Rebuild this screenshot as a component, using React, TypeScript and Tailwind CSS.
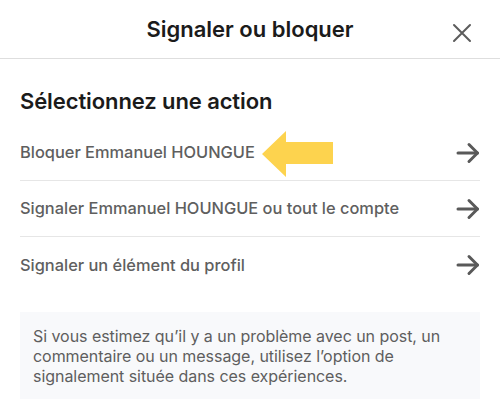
const rows = [
  "Bloquer Emmanuel HOUNGUE",
  "Signaler Emmanuel HOUNGUE ou tout le compte",
  "Signaler un élément du profil",
];

function ArrowRight() {
  return (
    <svg width="24" height="22" viewBox="0 0 24 22" fill="none" stroke="#595959" strokeWidth="3" strokeLinecap="round" strokeLinejoin="round">
      <path d="M2 11h19.5" />
      <path d="M13 2.5 21.5 11 13 19.5" />
    </svg>
  );
}

function Pointer() {
  return (
    <svg width="72" height="46" viewBox="0 0 72 46" className="absolute left-[262px] top-[131px]">
      <polygon points="0,23 24,0 24,11 71,11 71,33 24,33 24,46" fill="#fdd34e" />
    </svg>
  );
}

export default function App() {
  return (
    <div className="relative w-[500px] h-[407px] bg-white overflow-hidden font-['Inter','Liberation_Sans',sans-serif]">
      <div className="relative h-[59px] flex items-center justify-center border-b border-[#dedede]">
        <h1 className="text-[22px] font-semibold text-[#1b1b1b]">Signaler ou bloquer</h1>
        <svg width="20" height="20" viewBox="0 0 20 20" className="absolute right-[28px] top-[23px]" stroke="#5c5c5c" strokeWidth="2" strokeLinecap="round">
          <path d="M2 2 18 18M18 2 2 18" />
        </svg>
      </div>

      <div className="px-5">
        <h2 className="mt-[28px] text-[22px] font-semibold text-[#1b1b1b] leading-[28px] tracking-[-0.1px]">Sélectionnez une action</h2>
        <div className="mt-[10px]">
          {rows.map((r, i) => (
            <div
              key={r}
              className={`h-[56px] flex items-center justify-between ${i < rows.length - 1 ? "border-b border-[#e6e6e6]" : ""}`}
            >
              <span className="text-[16.4px] font-medium text-[#5f5f5f]">{r}</span>
              <ArrowRight />
            </div>
          ))}
        </div>

        <div className="mt-[19px] bg-[#f8f9fb] pl-[13px] pr-4 pt-[14px] pb-[13px]">
          <p className="text-[16px] leading-[20px] tracking-[-0.05px] text-[#5e5e5e]">
            Si vous estimez qu’il y a un problème avec un post, un commentaire ou un message, utilisez l’option de signalement située dans ces expériences.
          </p>
        </div>
      </div>

      <Pointer />
    </div>
  );
}
